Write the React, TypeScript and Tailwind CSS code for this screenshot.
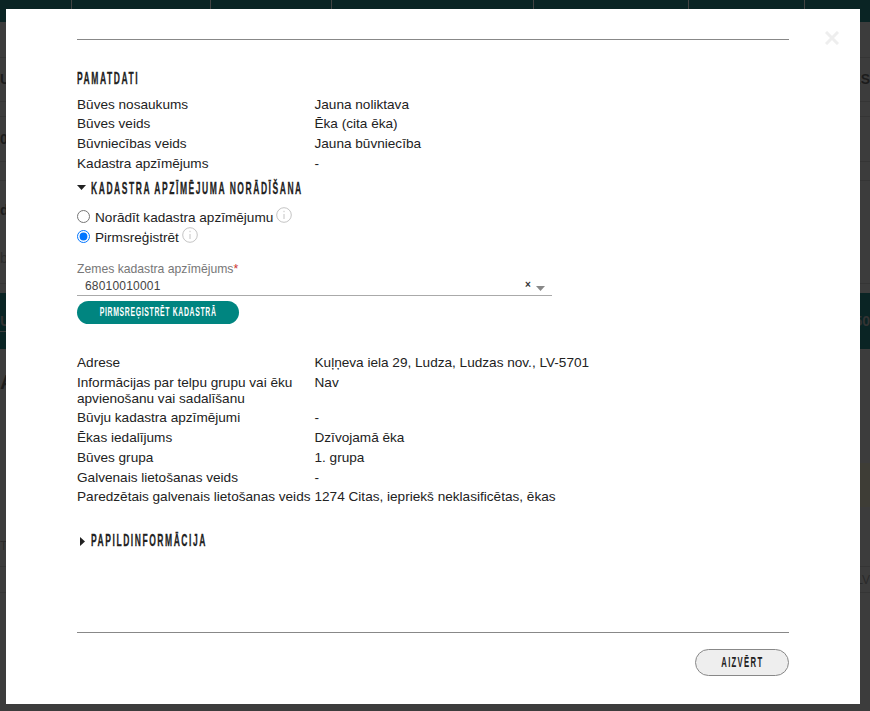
import type { ReactNode } from "react";

const headingFont = "font-['Liberation_Sans',sans-serif] font-bold uppercase whitespace-nowrap";

function Row({ label, value }: { label: string; value: string }) {
  return (
    <div className="flex">
      <div className="w-[237.5px] shrink-0">{label}</div>
      <div>{value}</div>
    </div>
  );
}

function InfoIcon() {
  return (
    <svg width="16" height="16" viewBox="0 0 16 16" fill="none" className="ml-[3px] -mt-[7px] shrink-0">
      <circle cx="8" cy="8" r="7.3" stroke="#c4c4c4" />
      <path d="M8 7v5M8 3.8v1.4" stroke="#c4c4c4" />
    </svg>
  );
}

function Heading({ children, className }: { children: ReactNode; className?: string }) {
  return (
    <div className={`${headingFont} inline-block origin-left scale-x-[0.5] text-[17px] leading-[18px] tracking-[3.1px] text-[#222] [-webkit-text-stroke:0.3px_#222] ${className ?? ""}`}>
      {children}
    </div>
  );
}

function SideBand({ className, left, right }: { className: string; left?: string; right?: string }) {
  return (
    <div className={`flex items-center justify-between text-[14px] font-bold text-[#1c1c1c] ${className}`}>
      <span>{left}</span>
      <span>{right}</span>
    </div>
  );
}

export default function App() {
  return (
    <div className="relative h-[711px] w-[870px] overflow-hidden bg-[#3c3c3c] font-['Liberation_Sans',Arial,sans-serif] text-[13.6px] text-[#222]">
      {/* page behind the overlay */}
      <div className="flex h-[22px] bg-[#0a2424]">
        <div className="w-[72px] border-r border-[#444]" />
        <div className="w-[139px] border-r border-[#444]" />
        <div className="w-[121px] border-r border-[#444]" />
        <div className="w-[202px] border-r border-[#444]" />
        <div className="w-[155px] border-r border-[#444]" />
        <div className="w-[116px] border-r border-[#444]" />
      </div>
      <div className="h-[35px]" />
      <SideBand className="h-[45px] border-y border-[#353535]" left="U" right="ES" />
      <div className="h-[14px]" />
      <SideBand className="h-[46px] border-y border-[#353535]" left="0" />
      <div className="h-[18px]" />
      <div className="flex h-[104px] flex-col items-start border-y border-[#353535] pt-[19px] text-[14px] text-[#1c1c1c]">
        <span className="font-bold">dr</span>
        <span className="mt-[27px] text-[#2c2c2c]">b</span>
      </div>
      <div className="h-[9px]" />
      <div className="relative flex h-[56px] items-center justify-between bg-[#0a2424] text-[14px] font-bold text-[#333]">
        <span>U</span>
        <span>50</span>
        <div className="absolute left-0 top-[38px] h-[1px] w-[6px] bg-[#3c3c3c]" />
      </div>
      <div className="h-[114px] pt-[22px] text-[20px] font-bold leading-[22px] text-[#1c1c1c]">A</div>
      <div className="flex h-[44px] justify-end">
        <div className="w-[10px] bg-[#3e3d36]" />
      </div>
      <div className="flex h-[59px] items-end pb-[11px] text-[12px] text-[#2a2a2a]">T</div>
      <SideBand className="h-[27px] border-y border-[#353535] !font-normal !text-[12px] !text-[#2a2a2a]" right="LV" />

      {/* modal */}
      <div className="absolute left-[6px] top-[9px] flex h-[695px] w-[854px] flex-col bg-white pl-[71px] pr-[71px]">
        <svg width="14" height="14" viewBox="0 0 14 14" className="absolute right-[21px] top-[22px]">
          <path d="M1 1l12 12M13 1L1 13" stroke="#eeeeee" strokeWidth="3" />
        </svg>
        <div className="mt-[30px] border-t border-[#888]" />

        <Heading className="mt-[30px]">Pamatdati</Heading>
        <div className="mt-[6.85px] leading-[19.6px]">
          <Row label="Būves nosaukums" value="Jauna noliktava" />
          <Row label="Būves veids" value="Ēka (cita ēka)" />
          <Row label="Būvniecības veids" value="Jauna būvniecība" />
          <Row label="Kadastra apzīmējums" value="-" />
        </div>

        <div className="mt-[7.15px] flex items-center">
          <svg width="9" height="5" viewBox="0 0 9 5" className="-mt-[4px] mr-[5px]">
            <path d="M0 0h9L4.5 5z" fill="#222" />
          </svg>
          <Heading>Kadastra apzīmējuma norādīšana</Heading>
        </div>

        <div className="mt-[10px] leading-[20px]">
          <label className="flex items-center">
            <input type="radio" name="kad" readOnly className="mr-[5px] -mt-[3px] h-[13px] w-[13px]" />
            Norādīt kadastra apzīmējumu
            <InfoIcon />
          </label>
          <label className="flex items-center">
            <input type="radio" name="kad" defaultChecked className="mr-[5px] -mt-[3px] h-[13px] w-[13px]" />
            Pirmsreģistrēt
            <InfoIcon />
          </label>
        </div>

        <div className="mt-[13px] text-[12.2px] leading-[16px] text-[#777]">
          Zemes kadastra apzīmējums<span className="text-[#c33]">*</span>
        </div>
        <div className="relative flex h-[19px] w-[475px] items-center border-b border-[#aaa] pl-[8px] text-[12px] tracking-[0.2px] text-[#444]">
          68010010001
          <span className="absolute left-[448px] top-[0px] text-[10px] font-bold leading-[16px] text-[#333]">×</span>
          <svg width="9" height="5" viewBox="0 0 9 5" className="absolute left-[459px] top-[9px]">
            <path d="M0 0h9L4.5 5z" fill="#888" />
          </svg>
        </div>
        <button className="mt-[5px] flex h-[23px] w-[162px] items-center justify-center rounded-full bg-[#008580]">
          <span className={`${headingFont} inline-block scale-x-[0.55] text-[12.5px] tracking-[1.2px] text-white`}>
            Pirmsreģistrēt kadastrā
          </span>
        </button>

        <div className="mt-[29px] leading-[20px]">
          <Row label="Adrese" value="Kuļņeva iela 29, Ludza, Ludzas nov., LV-5701" />
          <div className="flex">
            <div className="w-[237.5px] shrink-0 pb-[1px] pt-[2px] leading-[16px]">Informācijas par telpu grupu vai ēku apvienošanu vai sadalīšanu</div>
            <div>Nav</div>
          </div>
          <Row label="Būvju kadastra apzīmējumi" value="-" />
          <Row label="Ēkas iedalījums" value="Dzīvojamā ēka" />
          <Row label="Būves grupa" value="1. grupa" />
          <Row label="Galvenais lietošanas veids" value="-" />
          <div className="-mt-[1px]">
            <Row label="Paredzētais galvenais lietošanas veids" value="1274 Citas, iepriekš neklasificētas, ēkas" />
          </div>
        </div>

        <div className="mt-[25px] flex items-center">
          <svg width="5" height="9" viewBox="0 0 5 9" className="ml-[3px] mr-[6px]">
            <path d="M0 0l5 4.5L0 9z" fill="#222" />
          </svg>
          <Heading>Papildinformācija</Heading>
        </div>

        <div className="mt-auto border-t border-[#888]" />
        <div className="mb-[28px] mt-[16px] flex justify-end">
          <button className="flex h-[27px] w-[94px] items-center justify-center rounded-[14px] border border-[#888] bg-[#eee]">
            <span className={`${headingFont} inline-block scale-x-[0.55] text-[14px] tracking-[2.4px] text-[#222]`}>Aizvērt</span>
          </button>
        </div>
      </div>
    </div>
  );
}
